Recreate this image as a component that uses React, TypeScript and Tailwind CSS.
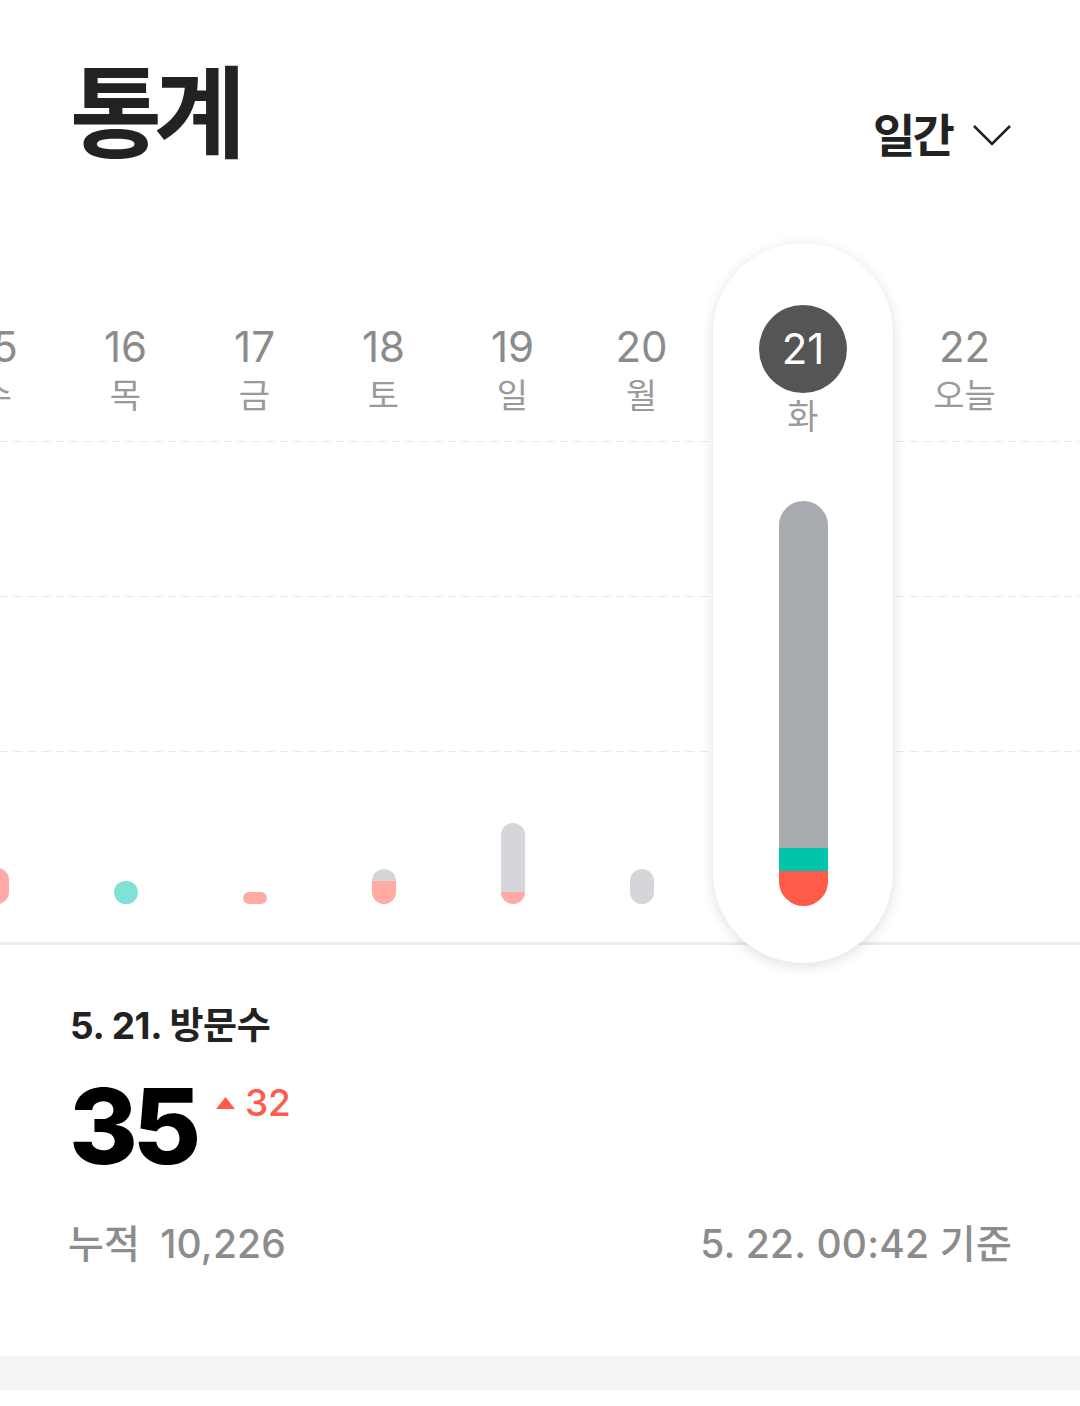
const FONT = { fontFamily: 'Inter, "Noto Sans CJK KR", sans-serif' };

type Seg = { h: number; color: string };

type Day = { num: string; label: string; bar: Seg[] };

const days: Day[] = [
  { num: "15", label: "수", bar: [{ h: 36, color: "bg-[#ffaba3]" }] },
  { num: "16", label: "목", bar: [{ h: 23, color: "bg-[#80e2d6]" }] },
  { num: "17", label: "금", bar: [{ h: 12, color: "bg-[#ffaba3]" }] },
  {
    num: "18",
    label: "토",
    bar: [
      { h: 12, color: "bg-[#d5d6d9]" },
      { h: 23, color: "bg-[#ffaba3]" },
    ],
  },
  {
    num: "19",
    label: "일",
    bar: [
      { h: 69, color: "bg-[#d5d6d9]" },
      { h: 12, color: "bg-[#ffaba3]" },
    ],
  },
  { num: "20", label: "월", bar: [{ h: 35, color: "bg-[#d5d6d9]" }] },
];

function Bar({ segs }: { segs: Seg[] }) {
  return (
    <div className="flex w-[24px] flex-col overflow-hidden rounded-full">
      {segs.map((s, i) => (
        <div key={i} className={s.color} style={{ height: s.h }} />
      ))}
    </div>
  );
}

function DayCol({ day }: { day: Day }) {
  return (
    <div className="flex h-full w-[129px] shrink-0 flex-col items-center">
      <div className="mt-[83px] text-[42px] leading-none text-[#8b8b8b]">{day.num}</div>
      <div className="mt-[11px] text-[34px] leading-none text-[#9a9a9a]">{day.label}</div>
      <div className="flex-1" />
      <div className="mb-[59px]">{day.bar.length > 0 && <Bar segs={day.bar} />}</div>
    </div>
  );
}

function GridLine({ top }: { top: string }) {
  return (
    <div
      className={`absolute left-0 right-0 h-px bg-[repeating-linear-gradient(90deg,#e8e8e8_0_8px,transparent_8px_14px)] ${top}`}
    />
  );
}

export default function App() {
  return (
    <div className="relative h-[1406px] w-[1080px] overflow-hidden bg-white" style={FONT}>
      {/* header */}
      <div className="flex justify-between pl-[70px] pr-[68px] pt-[64px]">
        <h1 className="h-[100px] text-[100px] font-bold leading-none tracking-[-0.08em] text-[#222]">
          통계
        </h1>
        <div className="mt-[41px] flex items-center gap-[20px]">
          <span className="-ml-[4px] text-[46px] font-bold leading-none tracking-[-0.06em] text-[#222]">일간</span>
          <svg width="40" height="22" viewBox="0 0 40 22" fill="none">
            <path d="M2 2 L20 20 L38 2" stroke="#222" strokeWidth="2.6" />
          </svg>
        </div>
      </div>

      {/* chart */}
      <div className="relative mt-[79px] h-[720px]">
        <GridLine top="top-[198px]" />
        <GridLine top="top-[353px]" />
        <GridLine top="top-[508px]" />
        <div className="absolute left-0 right-0 top-[699px] h-[3px] bg-[#ececec]" />

        <div className="relative z-10 -ml-[68px] flex h-full">
          {days.map((d) => (
            <DayCol key={d.num} day={d} />
          ))}

          <div className="flex h-full w-[194px] shrink-0 justify-center">
            <div className="flex h-full w-[180px] flex-col items-center rounded-full bg-white shadow-[0_3px_14px_rgba(0,0,0,0.13)]">
              <div className="mt-[62px] flex h-[88px] w-[88px] items-center justify-center rounded-full bg-[#555] text-[42px] leading-none text-white">
                21
              </div>
              <div className="mt-[7px] text-[34px] leading-none text-[#9a9a9a]">화</div>
              <div className="flex-1" />
              <div className="mb-[57px] flex w-[49px] flex-col overflow-hidden rounded-full">
                <div className="h-[347px] bg-[#a7aaae]" />
                <div className="h-[23px] bg-[#00c4ac]" />
                <div className="h-[35px] bg-[#ff5a4a]" />
              </div>
            </div>
          </div>

          <div className="flex h-full w-[129px] shrink-0 flex-col items-center">
            <div className="mt-[83px] text-[42px] leading-none text-[#8b8b8b]">22</div>
            <div className="mt-[11px] text-[34px] leading-none text-[#9a9a9a]">오늘</div>
          </div>
        </div>
      </div>

      {/* summary */}
      <div className="px-[70px]">
        <div className="mt-[44px] text-[37px] font-bold leading-none tracking-[-0.01em] text-[#222]">
          5. 21. 방문수
        </div>
        <div className="mt-[29px] flex items-start">
          <span className="-ml-[1px] text-[105px] font-extrabold leading-none tracking-[-0.05em] text-black">35</span>
          <div className="ml-[20px] mt-[11px] flex items-center gap-[10px]">
            <svg width="19" height="12" viewBox="0 0 19 12">
              <path d="M9.5 0 L19 12 L0 12 Z" fill="#ff5a4a" />
            </svg>
            <span className="text-[37px] font-medium leading-none text-[#ff5a4a]">32</span>
          </div>
        </div>
        <div className="mt-[46px] flex justify-between text-[39px] font-medium leading-none tracking-[0.005em] text-[#8c8c8c]">
          <span className="-ml-[2px] flex gap-[20px]">
            <span>누적</span>
            <span>10,226</span>
          </span>
          <span className="-mr-[2px]">5. 22. 00:42 기준</span>
        </div>
      </div>

      <div className="absolute left-0 right-0 top-[1356px] h-[34px] bg-[#f5f5f5]" />
    </div>
  );
}
